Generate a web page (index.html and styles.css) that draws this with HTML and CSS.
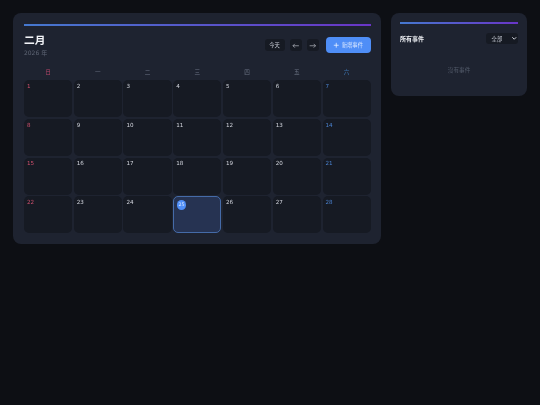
FILE: index.html
```html
<!DOCTYPE html>
<html lang="zh">
<head>
<meta charset="utf-8">
<title>日历</title>
<link rel="stylesheet" href="styles.css">
</head>
<body>
<div class="app">
  <main class="card calendar">
    <div class="accent"></div>
    <header class="head">
      <div class="title">
        <h1>二月</h1>
        <p>2026 年</p>
      </div>
      <div class="actions">
        <button class="btn today">今天</button>
        <button class="btn nav"><svg viewBox="0 0 12 12" class="arrow"><path d="M11 6H1.5M4.5 3 1.5 6l3 3"/></svg></button>
        <button class="btn nav"><svg viewBox="0 0 12 12" class="arrow"><path d="M1 6h9.5M7.5 3l3 3-3 3"/></svg></button>
        <button class="btn add"><svg viewBox="0 0 12 12" class="plus"><path d="M6 1.5v9M1.5 6h9"/></svg>新增事件</button>
      </div>
    </header>
    <div class="weekdays">
      <span class="sun">日</span><span>一</span><span>二</span><span>三</span><span>四</span><span>五</span><span class="sat">六</span>
    </div>
    <div class="grid">
      <div class="cell sun">1</div><div class="cell">2</div><div class="cell">3</div><div class="cell">4</div><div class="cell">5</div><div class="cell">6</div><div class="cell sat">7</div>
      <div class="cell sun">8</div><div class="cell">9</div><div class="cell">10</div><div class="cell">11</div><div class="cell">12</div><div class="cell">13</div><div class="cell sat">14</div>
      <div class="cell sun">15</div><div class="cell">16</div><div class="cell">17</div><div class="cell">18</div><div class="cell">19</div><div class="cell">20</div><div class="cell sat">21</div>
      <div class="cell sun">22</div><div class="cell">23</div><div class="cell">24</div><div class="cell now"><span class="badge">25</span></div><div class="cell">26</div><div class="cell">27</div><div class="cell sat">28</div>
    </div>
  </main>
  <aside class="card side">
    <div class="accent"></div>
    <div class="side-head">
      <h2>所有事件</h2>
      <div class="select">全部<svg viewBox="0 0 10 10" class="chev"><path d="M2 3.5 5 6.5 8 3.5"/></svg></div>
    </div>
    <p class="empty">沒有事件</p>
  </aside>
</div>
</body>
</html>
```
FILE: styles.css
```css
* { box-sizing: border-box; margin: 0; padding: 0; }
html, body { height: 100%; }
body {
  background: #0d0f14;
  color: #e8eaf0;
  font-family: "DejaVu Sans", "Noto Sans CJK TC", sans-serif;
  overflow: hidden;
}
.app {
  display: grid;
  grid-template-columns: 368px 135.5px;
  gap: 10px;
  align-items: start;
  padding: 13.3px;
  transform: translateZ(0);
  will-change: transform;
}
.card {
  background: #1e2330;
  border-radius: 8px;
  padding: 10.7px;
}
.accent {
  height: 2px;
  background: linear-gradient(90deg, #4f8ef7, #7c3aed);
  opacity: 0.8;
}
.head {
  display: flex;
  justify-content: space-between;
  align-items: center;
  margin-top: 8px;
}
.title h1 { font-size: 10.7px; line-height: 14px; font-weight: 700; color: #f2f4f8; }
.title p { font-size: 6px; line-height: 8px; color: #5f6675; margin-top: 1px; }
.actions { display: flex; align-items: center; gap: 5px; }
.btn {
  border: 0;
  font-family: inherit;
  display: flex;
  align-items: center;
  justify-content: center;
  background: #161a23;
  color: #c8ccd6;
  border-radius: 3px;
  height: 12px;
  font-size: 5.3px;
}
.today { width: 20px; }
.nav { width: 12px; }
.arrow { width: 7.5px; height: 7.5px; fill: none; stroke: #c8ccd6; stroke-width: 1; }
.add {
  width: 45px;
  height: 16px;
  margin-left: 2px;
  background: #4f8ef7;
  color: #dbe8ff;
  border-radius: 4px;
  gap: 2px;
}
.plus { width: 6.5px; height: 6.5px; fill: none; stroke: #eef4ff; stroke-width: 1.4; }
.weekdays {
  display: grid;
  grid-template-columns: repeat(7, 1fr);
  gap: 1.67px;
  margin-top: 11px;
  text-align: center;
  font-size: 5.6px;
  line-height: 8px;
  color: #6a7282;
}
.weekdays .sun { color: #b8476a; }
.weekdays .sat { color: #3a6fa8; }
.grid {
  display: grid;
  grid-template-columns: repeat(7, 1fr);
  grid-auto-rows: 37px;
  gap: 1.67px;
  margin-top: 4.5px;
}
.cell {
  background: #161a23;
  border-radius: 5px;
  padding: 2.5px 3px;
  font-size: 5.6px;
  line-height: 7px;
  font-weight: 400;
  color: #d4d7df;
}
.cell.sun { color: #d0506e; }
.cell.sat { color: #4a82d0; }
.cell.now {
  background: #263352;
  border: 0.7px solid #456ba8;
  padding: 2.6px;
}
.badge {
  display: flex;
  align-items: center;
  justify-content: center;
  width: 9.5px;
  height: 9.5px;
  border-radius: 50%;
  background: #4f8ef7;
  color: #dbe8ff;
  font-size: 4.8px;
}
.side { padding: 8.7px; }
.side-head {
  display: flex;
  justify-content: space-between;
  align-items: center;
  margin-top: 9px;
}
.side-head h2 { font-size: 6px; font-weight: 700; color: #eef0f4; }
.select {
  display: flex;
  align-items: center;
  justify-content: space-between;
  width: 32.5px;
  height: 11.3px;
  padding: 0 1px 0 6px;
  background: #161a23;
  border-radius: 3px;
  font-size: 5.3px;
  color: #c8ccd6;
}
.chev { width: 6.5px; height: 6.5px; fill: none; stroke: #d4d7df; stroke-width: 1.5; }
.empty {
  margin-top: 21.3px;
  padding-bottom: 14px;
  text-align: center;
  font-size: 5.6px;
  line-height: 8px;
  color: #525a69;
}
```
